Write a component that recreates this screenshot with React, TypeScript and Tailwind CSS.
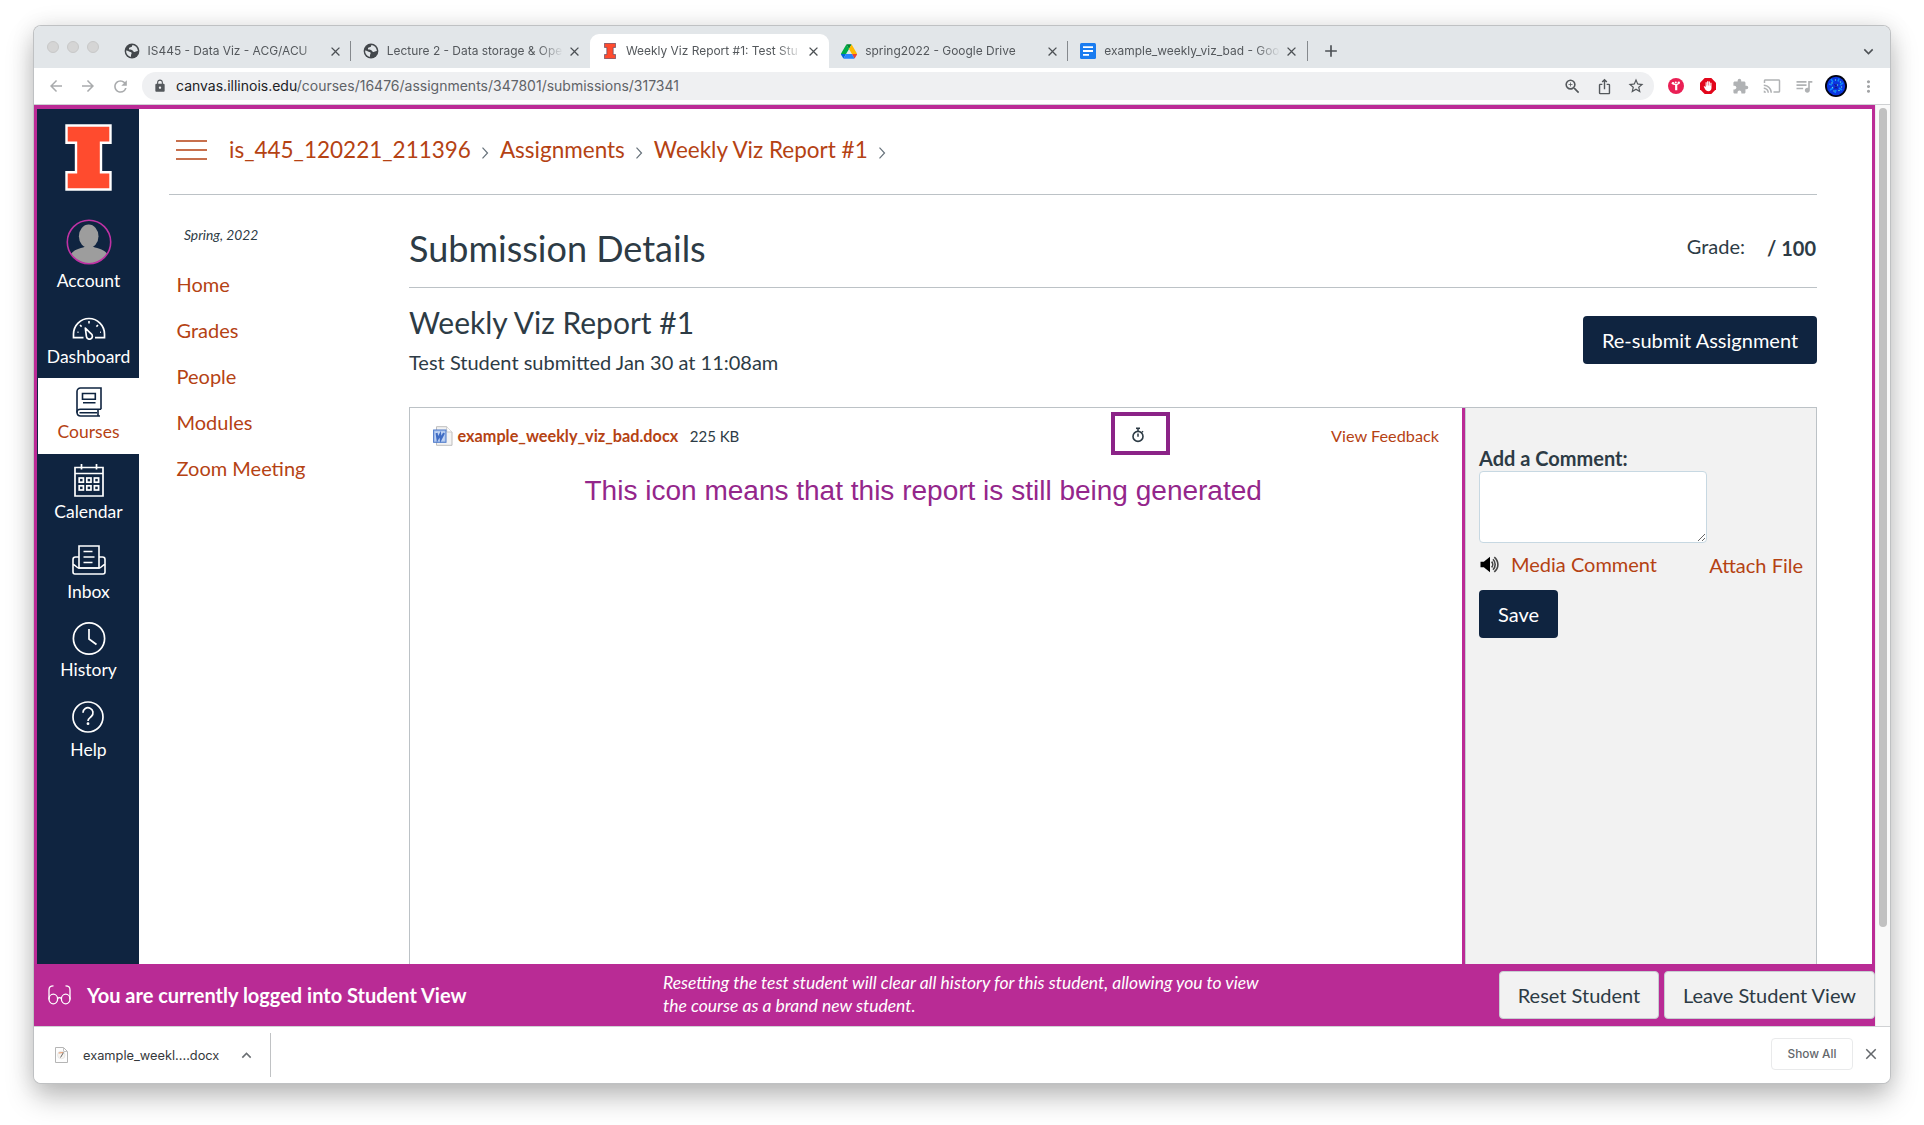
import type { ReactNode } from 'react';
import {
  MdAdd,
  MdArrowBack,
  MdArrowForward,
  MdCast,
  MdClose,
  MdExpandLess,
  MdExpandMore,
  MdExtension,
  MdIosShare,
  MdLock,
  MdMoreVert,
  MdQueueMusic,
  MdRefresh,
  MdStarBorder,
  MdZoomIn,
} from 'react-icons/md';

/* ---------- drawings ---------- */

function BlockI({ className, outline }: { className: string; outline: string }) {
  return (
    <svg viewBox="0 0 47 67" className={className} preserveAspectRatio="none">
      <path
        d="M1.500 1.500h44v17.200H36v29.600h9.500v17.200h-44V48.300h9.500V18.700H1.500z"
        fill="#ff4b2e"
        stroke={outline}
        strokeWidth="2.400"
      />
    </svg>
  );
}

function Globe() {
  return (
    <svg viewBox="0 0 16 16" className="size-4">
      <circle cx="8" cy="8" r="7.400" fill="#43474b" />
      <path
        d="M8.600 1.900c-1 1-.3 1.700-1.200 2.200-1.100.5-2.600.5-2.500 1.700.1 1.300 2.200.7 3.400 1.400 1 .6.900 1.700 2 1.900 1.300.2 1.600-1.100 3.600-1-.1-3.300-2.200-5.600-5.300-6.200zM2.100 7.600c-.2 3 1.700 5.500 4.700 6.300.5-1.300-.1-1.900.6-2.800.5-.8.200-1.700-.9-2-1.400-.3-2.300-1.500-4.400-1.500z"
        fill="#e2e6e9"
      />
    </svg>
  );
}

function DriveIcon() {
  return (
    <svg viewBox="0 0 87.300 78" className="h-[15px] w-4">
      <path d="m6.600 66.850 3.850 6.650c.8 1.400 1.950 2.500 3.300 3.300l13.750-23.800h-27.500c0 1.550.4 3.100 1.200 4.500z" fill="#0066da" />
      <path d="m43.650 25-13.750-23.800c-1.350.8-2.500 1.900-3.300 3.300l-25.400 44a9.060 9.060 0 0 0 -1.200 4.500h27.500z" fill="#00ac47" />
      <path d="m73.550 76.800c1.350-.8 2.500-1.900 3.300-3.300l1.600-2.750 7.650-13.250c.8-1.400 1.200-2.950 1.200-4.500h-27.502l5.852 11.500z" fill="#ea4335" />
      <path d="m43.650 25 13.750-23.800c-1.350-.8-2.900-1.200-4.500-1.200h-18.500c-1.600 0-3.150.45-4.500 1.200z" fill="#00832d" />
      <path d="m59.800 53h-32.300l-13.750 23.800c1.350.8 2.900 1.200 4.500 1.200h50.800c1.600 0 3.150-.45 4.500-1.200z" fill="#2684fc" />
      <path d="m73.400 26.500-12.700-22c-.8-1.400-1.950-2.500-3.300-3.300l-13.750 23.800 16.150 28h27.450c0-1.550-.4-3.100-1.200-4.500z" fill="#ffba00" />
    </svg>
  );
}

function DocsIcon() {
  return (
    <svg viewBox="0 0 16 16" className="size-4">
      <rect width="16" height="16" rx="1.500" fill="#1a7cf0" />
      <path d="M3 4.200h10M3 8h10M3 11.800h6" stroke="#fff" strokeWidth="1.800" />
    </svg>
  );
}

function Avatar() {
  return (
    <svg viewBox="0 0 46 46" className="size-[46px]">
      <defs>
        <clipPath id="avatar-clip">
          <circle cx="23" cy="23" r="21.500" />
        </clipPath>
      </defs>
      <g clipPath="url(#avatar-clip)" fill="#9d9d9d">
        <ellipse cx="22.700" cy="17.200" rx="9.800" ry="11.600" />
        <path d="M4 46V38c1-6 7-8 13-9.500 2-.5 3-1.500 3-3h6c0 1.500 1 2.500 3 3C35 30 41 32 42 37v9z" />
      </g>
      <circle cx="23" cy="23" r="21.700" fill="none" stroke="#bf32a4" strokeWidth="1.600" />
    </svg>
  );
}

function DashboardIcon() {
  return (
    <svg viewBox="0 0 34 23" className="h-[23px] w-[34px]" fill="none" stroke="#fff" strokeWidth="1.700">
      <path d="M11.500 20.700H1.500V17a15.500 15.500 0 0 1 31 0v3.700H23" />
      <path d="M13.300 11l5.600 5.600a3 3 0 1 1-4.500 2.700z" strokeLinejoin="round" />
      <path d="M17 4v2.500M8 8l1.600 1.600M26 8l-1.600 1.600M5.500 15.300h1M28 15.300h.8" strokeWidth="1.600" />
    </svg>
  );
}

function CoursesIcon() {
  return (
    <svg viewBox="0 0 26 30" className="h-[30px] w-[26px]" fill="none" stroke="#0f2440" strokeWidth="1.600">
      <path d="M25 22.300V1H4.500A3.500 3.500 0 0 0 1 4.500v21A3.700 3.700 0 0 0 4.700 29H24" />
      <path d="M1 25.500c0-2 1.500-3.200 3.500-3.200H25M22 22.500V29M3.500 25.700H21" />
      <path d="M6.500 6.500h12.800v5.800H6.500zM7 15.700h12.500" />
    </svg>
  );
}

function CalendarIcon() {
  const columns = [5.2, 12.8, 20.4];
  return (
    <svg viewBox="0 0 30 33" className="h-[33px] w-[30px]" fill="none" stroke="#fff" strokeWidth="1.700">
      <path d="M1 3.500h28V32H1zM1 9.500h28M7.500 0v5.500M22.500 0v5.500" />
      {columns.map((x) => (
        <g key={x}>
          <rect x={x} y="14" width="4.200" height="4.200" />
          <rect x={x} y="21.800" width="4.200" height="4.200" />
        </g>
      ))}
    </svg>
  );
}

function InboxIcon() {
  return (
    <svg viewBox="0 0 34 30" className="h-[30px] w-[34px]" fill="none" stroke="#fff" strokeWidth="1.600">
      <path d="M7 1h20v22H7z" />
      <path d="M7 12H3.500A2.500 2.500 0 0 0 1 14.500V27a2 2 0 0 0 2 2h28a2 2 0 0 0 2-2V14.500a2.500 2.500 0 0 0-2.500-2.500H27" />
      <path d="M1 19.500c2.500.3 3.500 3.500 6 3.500h20c2.500 0 3.500-3.200 6-3.500M11.500 6.500h9M11.500 12h11M11.500 17.500h9" />
    </svg>
  );
}

function HistoryIcon() {
  return (
    <svg viewBox="0 0 34 33" className="h-[33px] w-[34px]" fill="none" stroke="#fff" strokeWidth="1.700">
      <circle cx="17" cy="16.500" r="15.600" />
      <path d="M17 7v10l7.500 5.500" />
    </svg>
  );
}

function HelpIcon() {
  return (
    <svg viewBox="0 0 32 32" className="mr-[1.500px] size-8" fill="none" stroke="#fff" strokeWidth="1.700">
      <circle cx="16" cy="16" r="15" />
      <path d="M11 11.800a5 5 0 1 1 8.300 3.700c-1.700 1.500-3.300 2.200-3.300 4.500" />
      <circle cx="16" cy="22.700" r="1.400" fill="#fff" stroke="none" />
    </svg>
  );
}

function WordIcon() {
  return (
    <svg viewBox="0 0 20 20" className="size-5 shrink-0">
      <path d="M3.500.7h10.200L19 6v13.300H3.500z" fill="#f3f3f3" stroke="#bdbdbd" />
      <path d="M13.700.7V6H19" fill="#fff" stroke="#c9c9c9" />
      <rect x=".6" y="4" width="12.400" height="12.300" fill="#a9c3ee" stroke="#4d78c8" />
      <rect x="2.200" y="5.600" width="9.200" height="9.100" fill="#c3d5f3" />
      <path d="M3.600 7l.9 6.200L7.200 8.300l.6 4.900L11 7" fill="none" stroke="#3f6cc4" strokeWidth="2.100" />
    </svg>
  );
}

function Stopwatch() {
  return (
    <svg viewBox="0 0 14 16" className="h-4 w-3.500" fill="none" stroke="#2d3b45">
      <circle cx="7" cy="9.400" r="5" strokeWidth="1.600" />
      <path d="M5 1.300h4" strokeWidth="1.600" />
      <path d="M7 1v3M7 6.500v3.200M11 4.300l1 1" strokeWidth="1.500" />
    </svg>
  );
}

function Speaker() {
  return (
    <svg viewBox="0 0 20 17" className="ml-px h-[17px] w-5" fill="none">
      <path d="M.5 5.700h3.300L10 .8v15.400l-6.200-4.900H.5z" fill="#000" />
      <path
        d="M11.600 5.600c1.500 1.600 1.500 4.200 0 5.800M13 3.300c2.900 3 2.900 7.400 0 10.400M14.300 1.100c4.800 4.200 4.800 10.600 0 14.800"
        stroke="#444"
        strokeWidth="1.600"
      />
    </svg>
  );
}

function Glasses() {
  return (
    <svg viewBox="0 0 23 20" className="h-5 w-[23px]" fill="none" stroke="#fff" strokeWidth="1.300">
      <ellipse cx="5.300" cy="14" rx="4.300" ry="4.800" />
      <ellipse cx="17.700" cy="14" rx="4.300" ry="4.800" />
      <path d="M9.600 13.500c1-1.200 2.800-1.200 3.800 0M1 14.500V5C1 2 2.500.9 5.500.9M22 14.500V5C22 2 20.500.9 17.500.9" />
    </svg>
  );
}

function Chevron() {
  return (
    <span className="flex h-7 w-[29px] items-center justify-center pt-[5px]">
      <svg viewBox="0 0 8 12" className="h-3 w-2" fill="none" stroke="#66717a" strokeWidth="1.200">
        <path d="M1.500.7L6.500 6l-5 5.300" />
      </svg>
    </span>
  );
}

function DownloadFileIcon() {
  return (
    <svg viewBox="0 0 13 16" className="h-4 w-[13px]">
      <path d="M.5.500h8L12.500 4.500v11H.500z" fill="#fdfdfd" stroke="#b5b5b5" />
      <path d="M8.500.500v4h4" fill="none" stroke="#c4c4c4" />
      <circle cx="6.300" cy="8" r="3.800" fill="#f8f5f1" stroke="#dcdcdc" strokeWidth=".6" />
      <path d="M3.700 6l4.300-.4" stroke="#e39263" strokeWidth="1" />
      <path d="M8.500 5.500L5.500 10.500" stroke="#666" strokeWidth="1" />
    </svg>
  );
}

/* ---------- browser chrome ---------- */

type TabProps = { icon: ReactNode; title: string; active?: boolean; divider?: boolean };

function Tab({ icon, title, active, divider }: TabProps) {
  return (
    <div
      className={
        active
          ? 'relative flex h-[34px] w-[239.200px] items-center rounded-t-[9px] bg-white pl-3'
          : 'relative flex h-[34px] w-[239.200px] items-center pl-3'
      }
    >
      <span className="flex w-4 justify-center">{icon}</span>
      <span className="ml-2 w-[180px] overflow-hidden whitespace-nowrap text-[11.950px] leading-4 text-[#54585c] [mask-image:linear-gradient(to_right,#000_84%,transparent_98%)]">
        {title}
      </span>
      <MdClose className="size-[15px] text-[#4d5155]" />
      {divider && <span className="absolute right-0 top-[7px] h-5 w-px bg-[#85898d]" />}
    </div>
  );
}

function TabStrip() {
  return (
    <div className="flex h-[42px] items-end bg-[#e2e6e9]">
      <div className="flex h-[42px] w-[77.600px] items-center gap-2 pl-[13px]">
        <span className="size-3 rounded-full border border-[#c8c8c8] bg-[#d5d5d5]" />
        <span className="size-3 rounded-full border border-[#c8c8c8] bg-[#d5d5d5]" />
        <span className="size-3 rounded-full border border-[#c8c8c8] bg-[#d5d5d5]" />
      </div>
      <Tab icon={<Globe />} title="IS445 - Data Viz - ACG/ACU" divider />
      <Tab icon={<Globe />} title="Lecture 2 - Data storage & Ope" />
      <Tab
        icon={<BlockI className="h-4 w-3" outline="#3b3f63" />}
        title="Weekly Viz Report #1: Test Stu"
        active
      />
      <Tab icon={<DriveIcon />} title="spring2022 - Google Drive" divider />
      <Tab icon={<DocsIcon />} title="example_weekly_viz_bad - Goo" divider />
      <div className="flex h-[34px] flex-1 items-center justify-between pl-[13px] pr-3">
        <MdAdd className="size-5 text-[#4d5155]" />
        <MdExpandMore className="size-[19px] text-[#4d5155]" />
      </div>
    </div>
  );
}

function ToolbarSlot({ children }: { children: ReactNode }) {
  return <span className="flex w-8 shrink-0 items-center justify-center">{children}</span>;
}

function BrainAvatar() {
  return (
    <svg viewBox="0 0 22 22" className="size-[22px]">
      <circle cx="11" cy="11" r="11" fill="#02030f" />
      <circle cx="11" cy="11" r="9.200" fill="#0b35e0" />
      <path d="M6 4l2 3M14 3.500l-1 3M4 9l3 1M18 8l-3 2M5 15l3-2M17 15l-3-2M10 18l1-3" stroke="#0a85ff" strokeWidth="1.600" />
      <path d="M9.500 9l1.500 2 1.500-2M9.500 13.500l1.500-1.500 1.500 1.500" stroke="#1a1490" strokeWidth="1.200" fill="none" />
      <g fill="#5fe0d8">
        <circle cx="7" cy="8" r=".8" />
        <circle cx="15.500" cy="7" r=".8" />
        <circle cx="12.500" cy="10" r=".7" />
        <circle cx="7.500" cy="12.500" r=".7" />
        <circle cx="14" cy="15.500" r=".8" />
        <circle cx="9" cy="16" r=".7" />
        <circle cx="10.500" cy="5" r=".7" />
        <circle cx="16.500" cy="12" r=".7" />
      </g>
    </svg>
  );
}

function Toolbar() {
  return (
    <div className="flex h-9 items-center bg-white pl-[6px]">
      <ToolbarSlot>
        <MdArrowBack className="size-[18px] text-[#a9abad]" />
      </ToolbarSlot>
      <ToolbarSlot>
        <MdArrowForward className="size-[18px] text-[#a9abad]" />
      </ToolbarSlot>
      <ToolbarSlot>
        <MdRefresh className="size-[19px] text-[#a9abad]" />
      </ToolbarSlot>
      <div className="ml-[6px] flex h-7 w-[1512px] items-center rounded-full bg-[#eff0f2] pl-[11px] pr-[2px]">
        <MdLock className="size-[14px] text-[#54585c]" />
        <span className="ml-[9px] flex-1 whitespace-nowrap text-[14px] leading-5 text-[#5f6368]">
          <span className="text-[#202124]">canvas.illinois.edu</span>
          /courses/16476/assignments/347801/submissions/317341
        </span>
        <ToolbarSlot>
          <MdZoomIn className="size-[19px] text-[#54585c]" />
        </ToolbarSlot>
        <ToolbarSlot>
          <MdIosShare className="size-[17px] text-[#54585c]" />
        </ToolbarSlot>
        <ToolbarSlot>
          <MdStarBorder className="size-[18px] text-[#54585c]" />
        </ToolbarSlot>
      </div>
      <span className="w-[6px]" />
      <ToolbarSlot>
        <svg viewBox="0 0 16 16" className="size-4">
          <circle cx="8" cy="8" r="8" fill="#ea1f55" />
          <path d="M8.200 6.500v5.800" stroke="#fff" strokeWidth="2.200" />
          <path d="M5.200 5.800l3 1 2.600-1.300" stroke="#fff" strokeWidth="1.300" fill="none" />
          <circle cx="10.800" cy="4.800" r="1.200" fill="#fff" />
          <circle cx="7.800" cy="4.500" r="1" fill="#fff" />
          <circle cx="5" cy="5.300" r="1.300" fill="#fff" />
        </svg>
      </ToolbarSlot>
      <ToolbarSlot>
        <svg viewBox="0 0 16 16" className="size-4">
          <path d="M4.700 0h6.600L16 4.700v6.600L11.300 16H4.700L0 11.300V4.700z" fill="#e2061b" />
          <path
            d="M5.600 9.200V4.300h1.100V7.500h.4V3.200h1.200v4.300h.4V3.400h1.200v4.300h.4V4.800h1.200v5.200c0 2-1.200 3.200-3.100 3.200-1.800 0-2.600-.8-3.400-2.200L3.700 8.600c.6-.7 1.300-.4 1.900.6z"
            fill="#fff"
          />
        </svg>
      </ToolbarSlot>
      <ToolbarSlot>
        <MdExtension className="size-[17px] text-[#b0b2b4]" />
      </ToolbarSlot>
      <ToolbarSlot>
        <MdCast className="size-[18px] text-[#b0b2b4]" />
      </ToolbarSlot>
      <ToolbarSlot>
        <MdQueueMusic className="size-5 text-[#b0b2b4]" />
      </ToolbarSlot>
      <ToolbarSlot>
        <BrainAvatar />
      </ToolbarSlot>
      <ToolbarSlot>
        <MdMoreVert className="size-[19px] text-[#a2a4a6]" />
      </ToolbarSlot>
    </div>
  );
}

function DownloadShelf() {
  return (
    <div className="flex h-[57px] items-center border-t border-[#d0d2d4] bg-white pr-[10px]">
      <div className="my-auto flex h-11 w-[237px] items-center border-r border-[#c0c2c4] pl-[21px]">
        <DownloadFileIcon />
        <span className="ml-[15px] w-[137px] whitespace-nowrap pt-px text-[12.800px] leading-4 text-[#35383b]">
          example_weekl....docx
        </span>
        <MdExpandLess className="ml-[17px] size-[19px] text-[#6a6e72]" />
      </div>
      <div className="mb-[2px] ml-auto flex h-8 w-[82px] items-center justify-center rounded-[4px] border border-[#e9eaeb] pt-px text-[11.800px] font-medium text-[#63676b]">
        Show All
      </div>
      <MdClose className="mb-[2px] ml-[9px] size-[18px] text-[#63676b]" />
    </div>
  );
}

/* ---------- course page ---------- */

type NavItemProps = { icon: ReactNode; label: string; wrap: string; labelClass: string };

function NavItem({ icon, label, wrap, labelClass }: NavItemProps) {
  return (
    <div className={'flex flex-col items-center ' + wrap}>
      {icon}
      <span className={'text-[17.500px] leading-[21px] ' + labelClass}>{label}</span>
    </div>
  );
}

function GlobalNav() {
  return (
    <nav className="flex w-[102px] shrink-0 flex-col bg-[#0f2440] pl-px">
      <div className="mr-[1px] mt-[15px] flex justify-center">
        <BlockI className="h-[67px] w-[47px]" outline="#ffffff" />
      </div>
      <NavItem icon={<Avatar />} label="Account" wrap="mt-[28px]" labelClass="mt-[5px] text-white" />
      <NavItem icon={<DashboardIcon />} label="Dashboard" wrap="mt-[26px]" labelClass="mt-[6px] text-white" />
      <NavItem
        icon={<CoursesIcon />}
        label="Courses"
        wrap="mt-[11px] h-[76px] bg-white pt-[9px]"
        labelClass="mt-1 text-[#b54213]"
      />
      <NavItem icon={<CalendarIcon />} label="Calendar" wrap="mt-[10px]" labelClass="mt-1 text-white" />
      <NavItem icon={<InboxIcon />} label="Inbox" wrap="mt-[23px]" labelClass="mt-[6px] text-white" />
      <NavItem icon={<HistoryIcon />} label="History" wrap="mt-[20px]" labelClass="mt-1 text-white" />
      <NavItem icon={<HelpIcon />} label="Help" wrap="mt-[21px]" labelClass="mt-[6px] text-white" />
    </nav>
  );
}

function Breadcrumbs() {
  return (
    <div className="flex h-[86px] items-start border-b border-[#bcc2c6] pl-[7px] pt-[27px] text-[22.500px] leading-7 text-[#b54213]">
      <svg viewBox="0 0 31 28" className="h-7 w-[31px]" stroke="#b54213" strokeWidth="1.700">
        <path d="M0 5h31M0 14h31M0 23h31" />
      </svg>
      <span className="ml-[22px]">is_445_120221_211396</span>
      <Chevron />
      <span>Assignments</span>
      <Chevron />
      <span>Weekly Viz Report #1</span>
      <Chevron />
    </div>
  );
}

function CourseNav() {
  return (
    <div className="w-[240px] shrink-0 pt-[31px]">
      <div className="pl-[15px] text-[13.800px] italic leading-[17px]">Spring, 2022</div>
      <ul className="mt-[18px] pl-[7.500px] text-[20px] leading-[46px] text-[#b54213]">
        <li>Home</li>
        <li>Grades</li>
        <li>People</li>
        <li>Modules</li>
        <li>Zoom Meeting</li>
      </ul>
    </div>
  );
}

function SubmissionPane() {
  return (
    <div className="relative w-[1052px] shrink-0 pt-[18px]">
      <div className="flex h-5 items-center pl-[22.500px] pr-[23px] text-[16.250px] leading-5">
        <WordIcon />
        <span className="ml-[5px] font-bold text-[#b54213]">example_weekly_viz_bad.docx</span>
        <span className="ml-[11.500px] text-[15px]">225 KB</span>
        <span className="ml-auto text-[#b54213]">View Feedback</span>
      </div>
      <p className="mt-[29px] whitespace-nowrap pl-[174.500px] font-['Liberation_Sans',Arial,sans-serif] text-[28.030px] leading-8 text-[#94268b]">
        This icon means that this report is still being generated
      </p>
      <div className="absolute left-[701px] top-1 flex h-[43px] w-[59px] items-center justify-center border-4 border-[#8b2387] pr-[6px] pt-[2px]">
        <Stopwatch />
      </div>
    </div>
  );
}

function CommentPane() {
  return (
    <div className="flex flex-1 flex-col border-l border-[#c7cdd1] bg-[#f2f2f2] pl-[13px] pr-[13px] pt-[38px]">
      <label htmlFor="comment" className="text-[20px] font-bold leading-6">
        Add a Comment:
      </label>
      <textarea
        id="comment"
        className="mt-px block h-[72px] w-[228px] shrink-0 rounded-[4px] border border-[#c7d8e2] bg-white"
      />
      <div className="mt-[9px] flex h-6 items-center text-[20px] leading-6 text-[#b54213]">
        <Speaker />
        <span className="ml-[11px]">Media Comment</span>
        <span className="ml-auto pt-px">Attach File</span>
      </div>
      <button className="mt-[14px] h-12 w-[79px] rounded-[4px] bg-[#0f2440] text-[20px] leading-6 text-white">Save</button>
    </div>
  );
}

function Submission() {
  return (
    <main className="flex flex-1 flex-col">
      <header className="flex h-[93px] items-start border-b border-[#bcc2c6] pt-[31px]">
        <h1 className="text-[36px] leading-[44px]">Submission Details</h1>
        <span className="ml-auto mt-2 text-[20px] leading-6">Grade:</span>
        <span className="ml-[22px] mr-[1px] mt-[10px] text-[20px] font-bold leading-6">/ 100</span>
      </header>
      <div className="flex h-[119px] items-start justify-between">
        <div className="pt-4">
          <h2 className="text-[30px] leading-9">Weekly Viz Report #1</h2>
          <p className="mt-[10px] text-[20px] leading-6">Test Student submitted Jan 30 at 11:08am</p>
        </div>
        <button className="mt-7 h-12 w-[234px] rounded-[4px] bg-[#0f2440] text-[20px] leading-6 text-white">
          Re-submit Assignment
        </button>
      </div>
      <div className="flex flex-1 border-x border-t border-[#bcc2c6]">
        <SubmissionPane />
        <div className="w-[3px] bg-[#bb2b96]" />
        <CommentPane />
      </div>
    </main>
  );
}

function StudentViewBar() {
  return (
    <div className="flex h-[62px] items-center bg-[#b92b95] pl-[14px] text-white">
      <Glasses />
      <span className="ml-[16px] w-[576px] text-[20px] font-bold leading-6">
        You are currently logged into Student View
      </span>
      <p className="mb-[2px] whitespace-nowrap text-[17.500px] italic leading-[23px]">
        Resetting the test student will clear all history for this student, allowing you to view
        <br />
        the course as a brand new student.
      </p>
      <div className="ml-auto flex gap-[5px] text-[20px] leading-6 text-[#2d3b45]">
        <button className="h-12 w-[160px] rounded-[4px] border border-[#c7cdd1] bg-[#f2f2f2] pb-px">Reset Student</button>
        <button className="h-12 w-[211px] rounded-[4px] border border-[#c7cdd1] bg-[#f2f2f2] pb-px">
          Leave Student View
        </button>
      </div>
    </div>
  );
}

function CoursePage() {
  return (
    <div className="flex w-[1841px] shrink-0 flex-col font-[Lato,sans-serif] text-[#2d3b45]">
      <div className="flex h-[859px] border-x-[3px] border-t-4 border-[#bb2b96] bg-white">
        <GlobalNav />
        <div className="flex flex-1 flex-col pl-[30px] pr-[55px]">
          <Breadcrumbs />
          <div className="flex flex-1">
            <CourseNav />
            <Submission />
          </div>
        </div>
      </div>
      <StudentViewBar />
    </div>
  );
}

export default function App() {
  return (
    <div className="flex h-[1125px] w-[1924px] overflow-hidden bg-white pl-[34px] pt-[26px] font-[Inter,sans-serif]">
      <div className="flex h-[1057px] w-[1856px] flex-col overflow-hidden rounded-[7px] shadow-[0_0_0_1px_#bfc1c3,0_14px_28px_rgba(0,0,0,0.26),0_0_24px_rgba(0,0,0,0.1)]">
        <TabStrip />
        <Toolbar />
        <div className="flex h-[922px] border-t border-[#cfd1d3]">
          <CoursePage />
          <div className="flex flex-1 justify-center border-l border-[#ececec] bg-[#f9f9f9] pt-[3px]">
            <div className="h-[819px] w-2 rounded-full bg-[#c1c1c1]" />
          </div>
        </div>
        <DownloadShelf />
      </div>
    </div>
  );
}
